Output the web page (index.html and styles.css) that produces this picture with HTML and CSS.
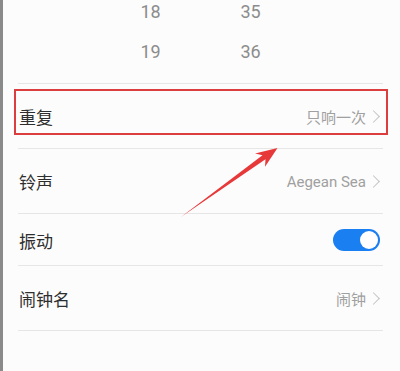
FILE: index.html
```html
<!DOCTYPE html>
<html lang="zh-CN">
<head>
<meta charset="UTF-8">
<meta name="viewport" content="width=device-width, initial-scale=1.0">
<title>闹钟设置</title>
<link rel="stylesheet" href="styles.css">
</head>
<body>
    <div class="page">
        <!-- 时间滚轮 -->
        <div class="picker">
            <div class="col">
                <div class="num">18</div>
                <div class="num">19</div>
            </div>
            <div class="col">
                <div class="num">35</div>
                <div class="num">36</div>
            </div>
        </div>

        <ul class="list">
            <li class="row">
                <span class="label">重复</span>
                <span class="value">只响一次<i class="chev"></i></span>
            </li>
            <li class="row">
                <span class="label">铃声</span>
                <span class="value">Aegean Sea<i class="chev"></i></span>
            </li>
            <li class="row short">
                <span class="label">振动</span>
                <span class="switch on"><span class="knob"></span></span>
            </li>
            <li class="row">
                <span class="label">闹钟名</span>
                <span class="value">闹钟<i class="chev"></i></span>
            </li>
        </ul>

        <!-- 标注 -->
        <div class="mark"></div>
        <svg class="arrow" width="400" height="371" viewBox="0 0 400 371">
            <polygon points="181,217 265.5,159.3 265,166.8 277.5,148 255,153.6 262.5,155.3" fill="#e8393a"/>
        </svg>
    </div>
</body>
</html>
```

FILE: styles.css
```css
body {
    margin: 0;
    background: #fcfcfc;
    font-family: Roboto, "Noto Sans CJK SC", sans-serif;
}
.page {
    position: relative;
    width: 397px;
    height: 371px;
    border-left: 3px solid #8a8a8a;
    overflow: hidden;
}
.picker {
    display: flex;
    justify-content: center;
    padding: 0 0 11px 1px;
    margin-right: 3px;
}
.col {
    width: 100px;
    margin-top: -8px;
}
.num {
    height: 40px;
    line-height: 40px;
    text-align: center;
    font-size: 18px;
    color: #8c8c8c;
}
.list {
    list-style: none;
    margin: 0 17px 0 15px;
    padding: 0;
    border-bottom: 1px solid #e6e6e6;
}
.row {
    border-top: 1px solid #e6e6e6;
    display: flex;
    align-items: center;
    justify-content: space-between;
    padding: 1px 3px 0 1px;
    box-sizing: border-box;
    height: 65px;
}
.row.short {
    height: 52px;
    padding-top: 1px;
}
.label {
    font-family: "Noto Sans CJK SC", sans-serif;
    font-size: 17px;
    color: #2e2e2e;
}
.value {
    display: flex;
    align-items: center;
    font-size: 15px;
    color: #a0a0a0;
}
.chev {
    width: 9px;
    height: 9px;
    border-top: 1.5px solid #c4c4c4;
    border-right: 1.5px solid #c4c4c4;
    box-sizing: border-box;
    transform: rotate(45deg);
    margin: 0 2px 0 3px;
}
.switch {
    width: 47px;
    height: 22px;
    border-radius: 11px;
    background: #1a7ff0;
    display: flex;
    align-items: center;
    justify-content: flex-end;
    padding: 0 2px;
    box-sizing: border-box;
}
.knob {
    width: 18px;
    height: 18px;
    border-radius: 50%;
    background: #fff;
}
.mark {
    position: absolute;
    left: 11px;
    top: 89px;
    width: 370px;
    height: 42px;
    border: 2px solid #dc3d3e;
}
.arrow {
    position: absolute;
    left: -3px;
    top: 0;
}
```
